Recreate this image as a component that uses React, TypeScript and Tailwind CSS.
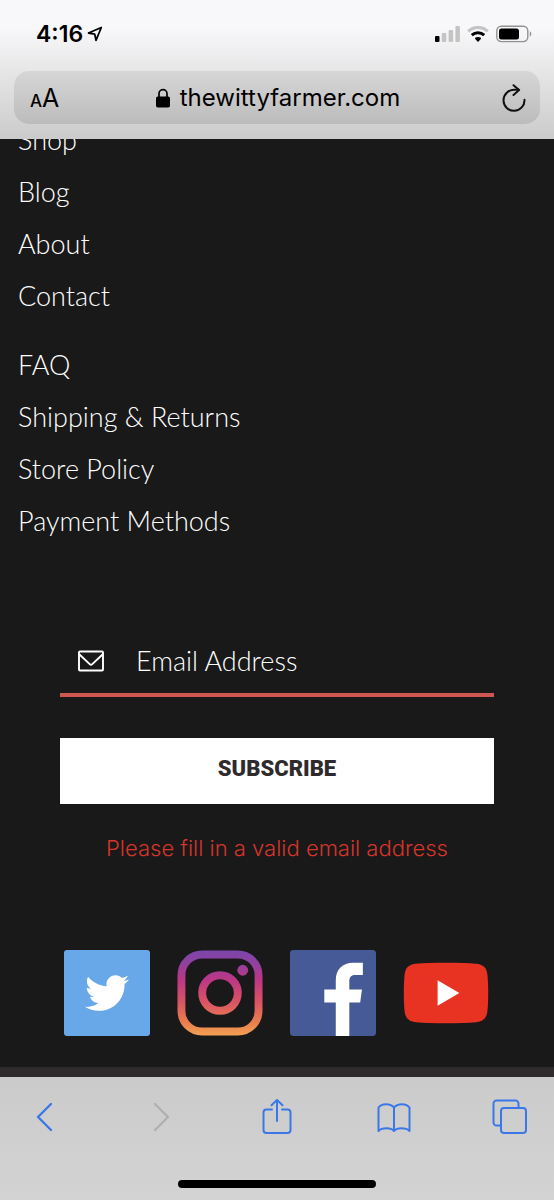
import React from "react";
import { FaTwitter } from "react-icons/fa";

const shopLinks = ["Shop", "Blog", "About", "Contact"];
const helpLinks = ["FAQ", "Shipping & Returns", "Store Policy", "Payment Methods"];

const StatusBar: React.FC = () => (
  <div className="flex h-[71px] items-center justify-between pl-9 pr-[22px] pb-1">
    <div className="flex items-center gap-1">
      <span className="text-[23px] leading-7 font-semibold">4:16</span>
      <svg viewBox="0 0 16 16" className="size-4" fill="none" stroke="#000" strokeWidth="1.8" strokeLinejoin="round">
        <path d="M14.3 1.5 1.5 7l6.2 1.1L9 14.3z" />
      </svg>
    </div>
    <div className="flex items-center gap-[7px]">
      <svg viewBox="0 0 25 16" className="h-4 w-[25px]">
        <rect x="0" y="10" width="4.5" height="6" rx="1" />
        <g fill="#c4c4c5">
          <rect x="6.8" y="7" width="4.5" height="9" rx="1" />
          <rect x="13.6" y="4" width="4.5" height="12" rx="1" />
          <rect x="20.4" y="0" width="4.5" height="16" rx="1" />
        </g>
      </svg>
      <svg viewBox="0 0 22 16" className="h-4 w-[22px]" fill="none" strokeWidth="3">
        <path d="M1.2 5.4a14 14 0 0 1 19.6 0" stroke="#c4c4c5" />
        <path d="M4.8 9.2a9 9 0 0 1 12.4 0" stroke="#000" />
        <path d="M8 11.8q3-1.700 6 0l-.2 1.200L11 15.9 8.200 13z" fill="#000" />
      </svg>
      <svg viewBox="0 0 36 18" className="h-[18px] w-9">
        <rect x="0.8" y="1.2" width="31" height="15.4" rx="4.5" fill="none" stroke="#929292" strokeWidth="1.4" />
        <rect x="3" y="3.4" width="20" height="11" rx="2.5" />
        <path d="M33.8 6.2c2 .8 2 4.6 0 5.4z" fill="#929292" />
      </svg>
    </div>
  </div>
);

const AddressBar: React.FC = () => (
  <div className="mx-3.5 flex h-[53px] items-center justify-between rounded-[15px] bg-linear-to-b from-[#d6d6d6] to-[#bcbcbc] pl-4 pr-3.5">
    <button type="button" aria-label="Text size" className="flex w-9 items-baseline pt-1 text-[25px] leading-8">
      <span className="text-[17px] font-medium">A</span>A
    </button>
    <button type="button" className="flex items-center gap-2.5 text-[24px] leading-8">
      <svg viewBox="0 0 14 20" className="h-5 w-3.5">
        <rect x="0" y="8.5" width="14" height="11" rx="1.8" />
        <path d="M3 9V5.6a4 4 0 0 1 8 0V9" fill="none" stroke="#000" strokeWidth="1.7" />
      </svg>
      thewittyfarmer.com
    </button>
    <button type="button" aria-label="Reload" className="flex w-9 justify-end">
      <svg viewBox="0 0 24 28" className="h-7 w-6" fill="none" stroke="#111" strokeWidth="2" strokeLinecap="round" strokeLinejoin="round">
        <path d="M22.5 15.8A10.5 10.5 0 1 1 12 5.800h4.600" />
        <path d="m11.500 1.200 5.600 4.900-5.600 4.900" />
      </svg>
    </button>
  </div>
);

const LinkList: React.FC<{ label: string; links: string[] }> = ({ label, links }) => (
  <nav aria-label={label} className="flex flex-col items-start">
    {links.map((link) => (
      <a key={link} href="#" className="py-2.5 text-[27px] leading-8">
        {link}
      </a>
    ))}
  </nav>
);

const SubscribeForm: React.FC = () => (
  <form noValidate className="mx-[60px] mt-[81px]" onSubmit={(e) => e.preventDefault()}>
    <div className="flex h-[69px] items-center gap-8 border-b-4 border-[#cf5751] pl-[18px]">
      <label htmlFor="email" aria-label="Email Address">
        <svg viewBox="0 0 26 22" className="h-[22px] w-[26px]" fill="none" stroke="#fff" strokeWidth="1.9" strokeLinejoin="round">
          <rect x="1" y="1.5" width="24" height="19" rx="1" />
          <path d="m1.5 4.5 10.2 9.6q1.3 1.2 2.6 0l10.2-9.6" />
        </svg>
      </label>
      <input
        id="email"
        type="email"
        placeholder="Email Address"
        className="w-full min-w-0 flex-1 bg-transparent text-[27px] leading-8 outline-none placeholder:text-white"
      />
    </div>
    <button
      type="submit"
      className="mt-[41px] h-[66px] w-full bg-white pb-1 font-[Roboto,sans-serif] text-[22px] leading-8 font-black text-[#2f2b2d]"
    >
      SUBSCRIBE
    </button>
    <p className="mt-7 text-center font-[Inter,sans-serif] text-[22px] leading-8 font-light whitespace-nowrap text-[#d6352b]">
      Please fill in a valid email address
    </p>
  </form>
);

const SocialLinks: React.FC = () => (
  <div className="mt-[86px] flex items-center justify-center gap-[27px] pr-0.5">
    <a href="#" aria-label="Twitter" className="flex size-[86px] items-center justify-center rounded-[3px] bg-[#69a8e8]">
      <FaTwitter className="size-11 text-white" />
    </a>
    <a href="#" aria-label="Instagram">
      <svg viewBox="0 0 87 87" className="size-[86px]" fill="none">
        <defs>
          <linearGradient id="insta" x1="0" y1="0" x2="0" y2="87" gradientUnits="userSpaceOnUse">
            <stop offset="0" stopColor="#7a46ac" />
            <stop offset="0.15" stopColor="#9140a0" />
            <stop offset="0.35" stopColor="#bd3785" />
            <stop offset="0.6" stopColor="#d95365" />
            <stop offset="0.85" stopColor="#eb7f4d" />
            <stop offset="1" stopColor="#f3a354" />
          </linearGradient>
        </defs>
        <g stroke="url(#insta)" strokeWidth="8">
          <rect x="4.5" y="4.5" width="78" height="78" rx="21" />
          <circle cx="43.5" cy="43.5" r="18" />
        </g>
        <circle cx="66.5" cy="20.5" r="5.5" fill="url(#insta)" />
      </svg>
    </a>
    <a href="#" aria-label="Facebook">
      <svg viewBox="0 0 87 87" className="size-[86px]">
        <rect width="87" height="87" rx="3.5" fill="#455a96" />
        <path
          fill="#fff"
          d="M46.300 87V53H34.700V40h11.600V31C46.300 19.500 53 13 64 13h9.700v12.400H66c-4.600 0-6 2.600-6 6.600v8h12.800L71 53H60v34z"
        />
      </svg>
    </a>
    <a href="#" aria-label="YouTube">
      <svg viewBox="0 0 87 87" className="size-[86px]">
        <path
          fill="#e83323"
          d="M43.500 13C56 13 66 13.400 74 14c7 .6 10.600 4 11.400 11 .5 5 .8 11 .8 18.500s-.3 13.500-.8 18.500c-.8 7-4.400 10.400-11.400 11-8 .6-18 1-30.500 1S21 73.600 13 73C6 72.400 2.400 69 1.600 62 1.100 57 .8 51 .8 43.500S1.100 30 1.600 25C2.400 18 6 14.600 13 14c8-.6 18-1 30.500-1z"
        />
        <path fill="#fff" d="M35 30.500v26l22-13z" />
      </svg>
    </a>
  </div>
);

const Toolbar: React.FC = () => (
  <footer className="bg-linear-to-b from-[#cccbcb] to-[#d3d3d3] pt-[22px] pb-3">
    <div className="flex items-center justify-between px-[26px] text-[#3b78e7]">
      <button type="button" aria-label="Back" className="size-9">
        <svg viewBox="0 0 36 36" fill="none" stroke="currentColor" strokeWidth="2.4" strokeLinecap="round" strokeLinejoin="round">
          <path d="M25 5 12 18l13 13" />
        </svg>
      </button>
      <button type="button" aria-label="Forward" className="size-9 text-[#b0b0b0]" disabled>
        <svg viewBox="0 0 36 36" fill="none" stroke="currentColor" strokeWidth="2.4" strokeLinecap="round" strokeLinejoin="round">
          <path d="m12 5 13 13-13 13" />
        </svg>
      </button>
      <button type="button" aria-label="Share" className="size-9">
        <svg viewBox="0 0 36 36" fill="none" stroke="currentColor" strokeWidth="2" strokeLinecap="round" strokeLinejoin="round">
          <path d="M13 10.5H7.5a3 3 0 0 0-3 3V31a3 3 0 0 0 3 3h21a3 3 0 0 0 3-3V13.5a3 3 0 0 0-3-3H23" />
          <path d="M18 22V1M12.5 6.3 18 .9l5.5 5.4" />
        </svg>
      </button>
      <button type="button" aria-label="Bookmarks" className="size-9">
        <svg viewBox="0 0 36 36" fill="none" stroke="currentColor" strokeWidth="2" strokeLinecap="round" strokeLinejoin="round">
          <path d="M18 8.500V32c-3-3.600-12-3.600-15.500 0V8.500C5.500 4 14.500 4 18 8.500zM18 8.500C21.500 4 30.500 4 33.500 8.500V32c-3.500-3.600-12.500-3.600-15.500 0" />
        </svg>
      </button>
      <button type="button" aria-label="Tabs" className="size-9">
        <svg viewBox="0 0 36 36" fill="none" stroke="currentColor" strokeWidth="2" strokeLinejoin="round">
          <rect x="9" y="9" width="25" height="25" rx="3" />
          <path d="M26.5 9V4.5a3 3 0 0 0-3-3h-19a3 3 0 0 0-3 3v19a3 3 0 0 0 3 3H9" />
        </svg>
      </button>
    </div>
    <div className="mx-auto mt-[45px] h-2 w-[198px] rounded-full bg-black" />
  </footer>
);

const App: React.FC = () => (
  <div className="flex min-h-screen flex-col bg-[#191919] font-[Inter,sans-serif] text-black">
    <header className="sticky top-0 z-10 bg-linear-to-b from-[#f8f8fa] from-20% to-[#cbcbcb] pb-[15px]">
      <StatusBar />
      <AddressBar />
    </header>

    {/* first link is partly scrolled under the header */}
    <main className="-mt-[25px] flex-1 font-[Lato,sans-serif] font-light text-white">
      <div className="flex flex-col gap-[17px] px-[18px]">
        <LinkList label="Site" links={shopLinks} />
        <LinkList label="Help" links={helpLinks} />
      </div>
      <SubscribeForm />
      <SocialLinks />
    </main>

    <div className="h-2.5 bg-[#2f2b2d]" />
    <Toolbar />
  </div>
);

export default App;
